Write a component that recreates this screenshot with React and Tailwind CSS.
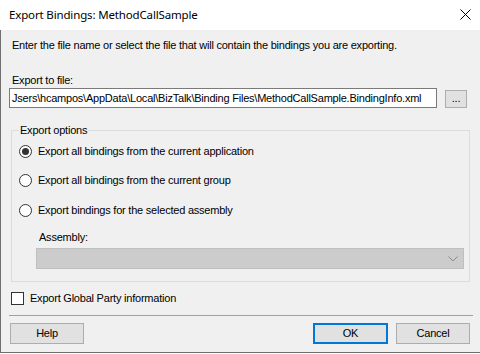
import React from "react";

function Radio({ checked, label, className = "" }) {
  return (
    <div className={"flex items-center h-[13px] ml-[7px] " + className}>
      <div className="w-[13px] h-[13px] rounded-full border border-[#333333] bg-white flex items-center justify-center shrink-0">
        {checked && <div className="w-[7px] h-[7px] rounded-full bg-[#333333]" />}
      </div>
      <span className="ml-[6px] leading-[13px]">{label}</span>
    </div>
  );
}

export default function App() {
  return (
    <div
      className="w-[480px] h-[354px] bg-white overflow-hidden text-[11px] tracking-[-0.22px] text-black"
      style={{ fontFamily: '"Liberation Sans", Arial, sans-serif' }}
    >
      {/* Title bar */}
      <div className="h-[30px] flex items-center justify-between bg-white">
        <span
          className="ml-[9px] text-[11.5px] tracking-[-0.15px] leading-[16px] text-black"
          style={{ fontFamily: '"Noto Sans", "Open Sans", sans-serif' }}
        >
          Export Bindings: MethodCallSample
        </span>
        <svg width="11" height="11" viewBox="0 0 11 11" className="mr-[9px] mb-[1px]">
          <path d="M0.5 0.5 L10.5 10.5 M10.5 0.5 L0.5 10.5" stroke="#000" strokeWidth="1" fill="none" />
        </svg>
      </div>

      {/* Body */}
      <div className="h-[323px] bg-[#f0f0f0] border-l border-b border-[#6e6e6e] flex flex-col">
        <div className="mt-[9px] ml-[11px] leading-[13px]">
          Enter the file name or select the file that will contain the bindings you are exporting.
        </div>

        <div className="mt-[22px] ml-[11px] leading-[13px]">Export to file:</div>

        <div className="mt-[1px] ml-[8px] flex items-center">
          <div className="w-[428px] h-[20px] border border-[#7a7a7a] bg-white overflow-hidden flex items-center pl-[2px]">
            <span className="whitespace-nowrap leading-[13px]">
              Jsers\hcampos\AppData\Local\BizTalk\Binding Files\MethodCallSample.BindingInfo.xml
            </span>
          </div>
          <div className="ml-[8px] mt-[2px] w-[22px] h-[18px] border border-[#adadad] bg-[#e1e1e1] flex items-center justify-center leading-[13px] pb-[2px]">
            ...
          </div>
        </div>

        {/* Group box */}
        <div className="mt-[22px] ml-[10px] w-[459px] h-[152px] border border-[#dcdcdc] relative flex flex-col">
          <span className="absolute -top-[7px] left-[7px] px-[1px] bg-[#f0f0f0] leading-[13px]">
            Export options
          </span>
          <Radio checked label="Export all bindings from the current application" className="mt-[14px]" />
          <Radio label="Export all bindings from the current group" className="mt-[16px]" />
          <Radio label="Export bindings for the selected assembly" className="mt-[17px]" />
          <div className="mt-[14px] ml-[27px] leading-[13px]">Assembly:</div>
          <div className="mt-[4px] ml-[24px] w-[428px] h-[21px] border border-[#bfbfbf] bg-[#cccccc] flex items-center justify-end pr-[5px]">
            <svg width="10" height="6" viewBox="0 0 10 6">
              <path d="M0.5 0.5 L5 5 L9.5 0.5" stroke="#8a8a8a" strokeWidth="1" fill="none" />
            </svg>
          </div>
        </div>

        {/* Checkbox */}
        <div className="mt-[10px] ml-[10px] flex items-center h-[13px]">
          <div className="w-[13px] h-[13px] border border-[#333333] bg-white shrink-0" />
          <span className="ml-[6px] leading-[13px]">Export Global Party information</span>
        </div>

        {/* Separator */}
        <div className="mt-[10px] ml-[8px] w-[464px] h-[1px] bg-[#a0a0a0]" />

        {/* Buttons */}
        <div className="mt-[7px] ml-[9px] flex items-center">
          <div className="w-[74px] h-[21px] border border-[#adadad] bg-[#e1e1e1] flex items-center justify-center leading-[13px]">
            Help
          </div>
          <div className="ml-[229px] w-[75px] h-[21px] border-2 border-[#0078d7] bg-[#e1e1e1] flex items-center justify-center leading-[13px]">
            OK
          </div>
          <div className="ml-[8px] w-[74px] h-[21px] border border-[#adadad] bg-[#e1e1e1] flex items-center justify-center leading-[13px]">
            Cancel
          </div>
        </div>
      </div>
    </div>
  );
}
